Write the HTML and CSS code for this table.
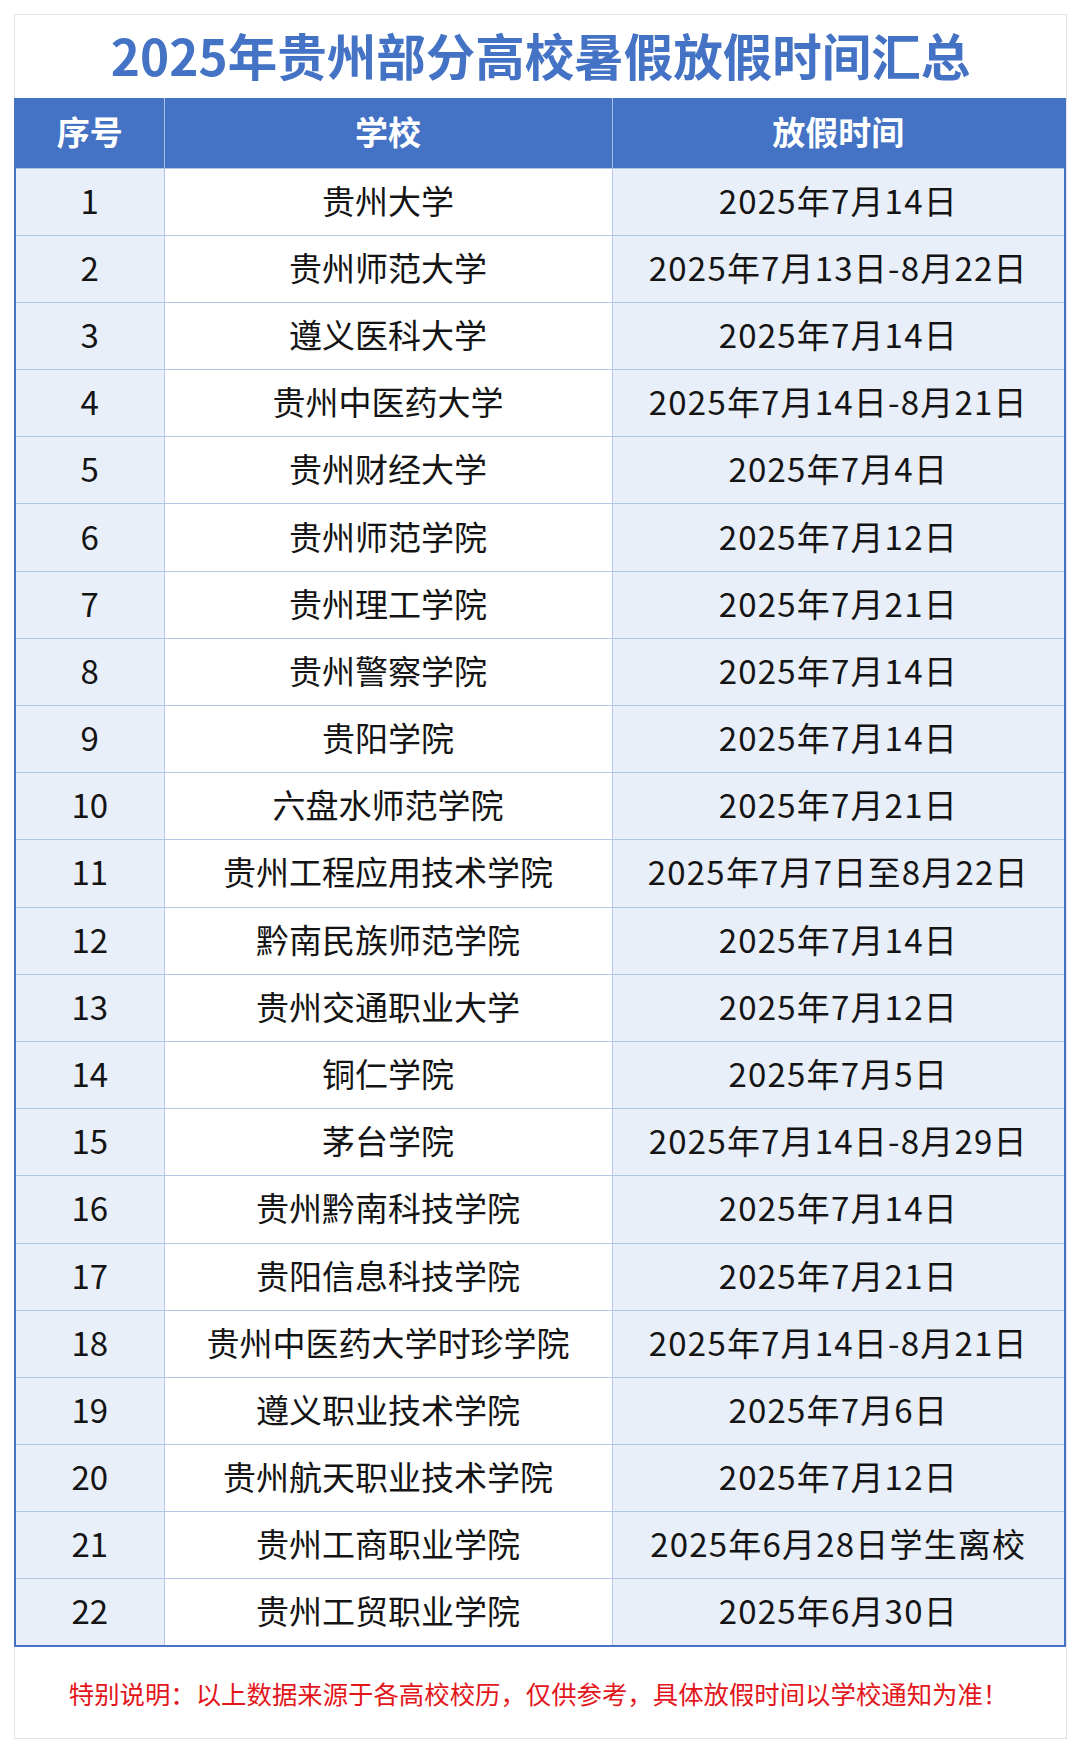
FILE: index.html
```html
<!DOCTYPE html>
<html lang="zh-CN">
<head>
<meta charset="utf-8">
<title>2025年贵州部分高校暑假放假时间汇总</title>
<link rel="stylesheet" href="styles.css">
</head>
<body>
<div class="card">
  <h1 class="title">2025年贵州部分高校暑假放假时间汇总</h1>
  <table class="sheet">
    <colgroup><col class="c-no"><col class="c-school"><col class="c-date"></colgroup>
    <thead>
      <tr><th>序号</th><th>学校</th><th>放假时间</th></tr>
    </thead>
    <tbody>
      <tr><td>1</td><td>贵州大学</td><td>2025年7月14日</td></tr>
      <tr><td>2</td><td>贵州师范大学</td><td>2025年7月13日-8月22日</td></tr>
      <tr><td>3</td><td>遵义医科大学</td><td>2025年7月14日</td></tr>
      <tr><td>4</td><td>贵州中医药大学</td><td>2025年7月14日-8月21日</td></tr>
      <tr><td>5</td><td>贵州财经大学</td><td>2025年7月4日</td></tr>
      <tr><td>6</td><td>贵州师范学院</td><td>2025年7月12日</td></tr>
      <tr><td>7</td><td>贵州理工学院</td><td>2025年7月21日</td></tr>
      <tr><td>8</td><td>贵州警察学院</td><td>2025年7月14日</td></tr>
      <tr><td>9</td><td>贵阳学院</td><td>2025年7月14日</td></tr>
      <tr><td>10</td><td>六盘水师范学院</td><td>2025年7月21日</td></tr>
      <tr><td>11</td><td>贵州工程应用技术学院</td><td>2025年7月7日至8月22日</td></tr>
      <tr><td>12</td><td>黔南民族师范学院</td><td>2025年7月14日</td></tr>
      <tr><td>13</td><td>贵州交通职业大学</td><td>2025年7月12日</td></tr>
      <tr><td>14</td><td>铜仁学院</td><td>2025年7月5日</td></tr>
      <tr><td>15</td><td>茅台学院</td><td>2025年7月14日-8月29日</td></tr>
      <tr><td>16</td><td>贵州黔南科技学院</td><td>2025年7月14日</td></tr>
      <tr><td>17</td><td>贵阳信息科技学院</td><td>2025年7月21日</td></tr>
      <tr><td>18</td><td>贵州中医药大学时珍学院</td><td>2025年7月14日-8月21日</td></tr>
      <tr><td>19</td><td>遵义职业技术学院</td><td>2025年7月6日</td></tr>
      <tr><td>20</td><td>贵州航天职业技术学院</td><td>2025年7月12日</td></tr>
      <tr><td>21</td><td>贵州工商职业学院</td><td>2025年6月28日学生离校</td></tr>
      <tr><td>22</td><td>贵州工贸职业学院</td><td>2025年6月30日</td></tr>
    </tbody>
  </table>
  <p class="note">特别说明：以上数据来源于各高校校历，仅供参考，具体放假时间以学校通知为准！</p>
</div>
</body>
</html>
```

FILE: styles.css
```css
html, body {
  margin: 0;
  padding: 0;
  background: #ffffff;
}

body {
  font-family: "Noto Sans CJK SC", "Noto Sans", sans-serif;
  color: #141414;
}

.card {
  box-sizing: border-box;
  width: 1053px;
  height: 1725px;
  margin: 14px 0 0 14px;
  border: 1px solid #e3e3e3;
  display: flex;
  flex-direction: column;
}

.title {
  margin: 0;
  height: 83px;
  flex: none;
  display: flex;
  align-items: center;
  justify-content: center;
  font-size: 49.5px;
  font-weight: 700;
  color: #4472c4;
  letter-spacing: 0;
  line-height: 1;
  padding-bottom: 4px;
  box-sizing: border-box;
}

.sheet {
  width: calc(100% + 1px);
  margin-left: -1px;
  border-collapse: collapse;
  table-layout: fixed;
  flex: none;
}

.c-no { width: 149px; }
.c-school { width: 448px; }
.c-date { width: auto; }

.sheet th {
  height: 70px;
  box-sizing: border-box;
  padding: 0 0 3px;
  background: #4472c4;
  color: #ffffff;
  font-size: 33px;
  font-weight: 700;
  line-height: 1;
  text-align: center;
  vertical-align: middle;
  border-left: 1px solid #a9bde6;
  border-right: 1px solid #a9bde6;
}

.sheet th:first-child { border-left: 2px solid #4472c4; }
.sheet th:last-child { border-right: 2px solid #4472c4; }

.sheet td {
  height: 67.2px;
  padding: 0 0 3px;
  box-sizing: border-box;
  font-size: 33px;
  line-height: 1;
  text-align: center;
  vertical-align: middle;
  border: 1px solid #b4c6e7;
  background: #ffffff;
}

.sheet td:nth-child(1),
.sheet td:nth-child(3) {
  background: #e9eff9;
}

.sheet td:nth-child(3) {
  letter-spacing: 1.2px;
}

.sheet td:first-child { border-left: 2px solid #4472c4; }
.sheet td:last-child { border-right: 2px solid #4472c4; }
.sheet tbody tr:last-child td { border-bottom: 2px solid #4472c4; }

.note {
  margin: 0;
  flex: 1;
  display: flex;
  align-items: center;
  justify-content: center;
  font-size: 25.4px;
  color: #e3161c;
  padding-right: 4px;
}
```
